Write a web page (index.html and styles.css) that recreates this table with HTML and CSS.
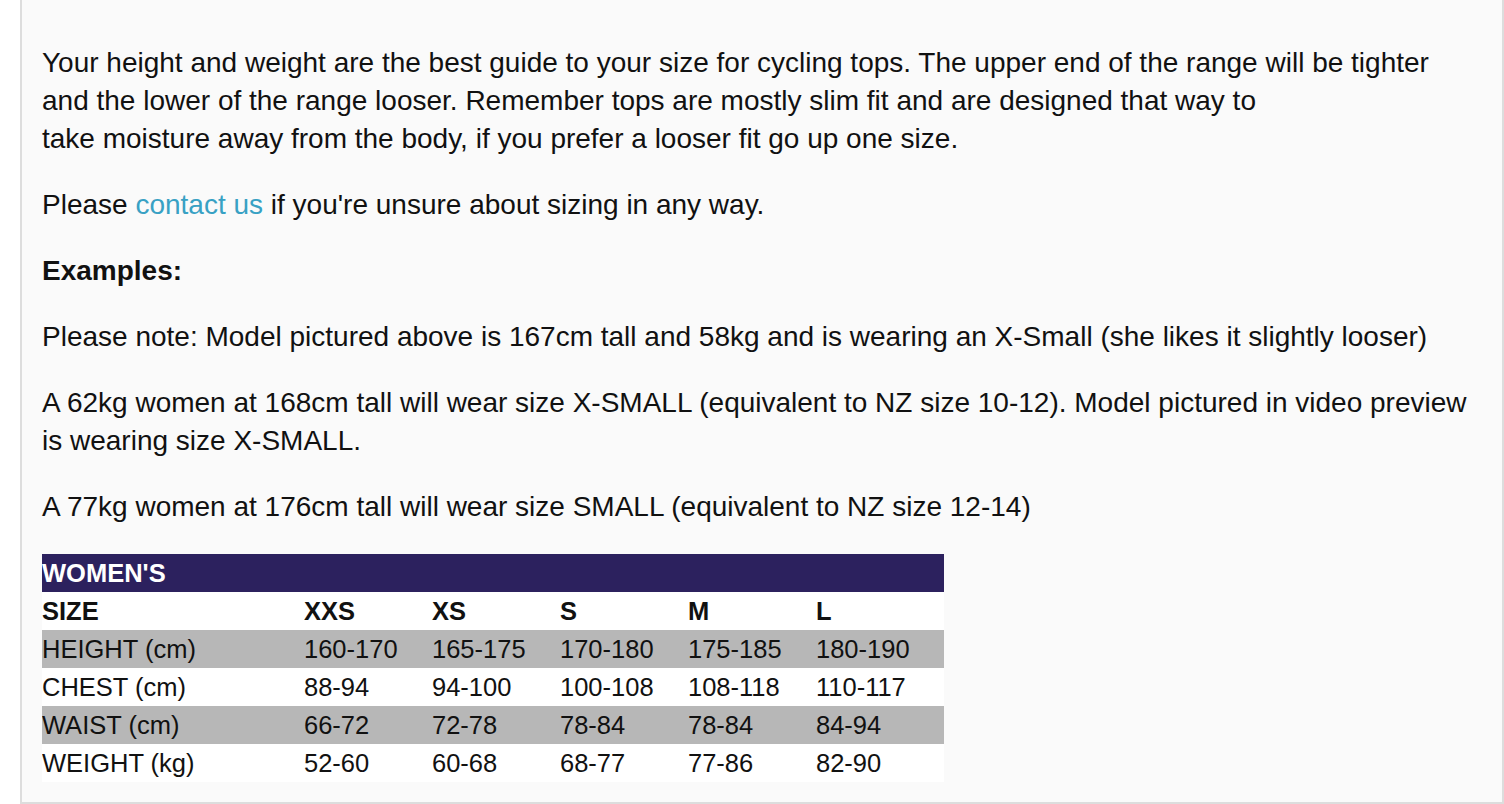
FILE: index.html
```html
<!DOCTYPE html>
<html lang="en">
<head>
<meta charset="utf-8">
<title>Sizing</title>
<link rel="stylesheet" href="styles.css">
</head>
<body>
<div class="panel">
  <p>Your height and weight are the best guide to your size for cycling tops. The upper end of the range will be tighter and the lower of the range looser. Remember tops are mostly slim fit and are designed that way to<br>take moisture away from the body, if you prefer a looser fit go up one size.</p>
  <p>Please <a href="#" class="link">contact us</a> if you're unsure about sizing in any way.</p>
  <p class="strong">Examples:</p>
  <p>Please note: Model pictured above is 167cm tall and 58kg and is wearing an X-Small (she likes it slightly looser)</p>
  <p>A 62kg women at 168cm tall will wear size X-SMALL (equivalent to NZ size 10-12). Model pictured in video preview is wearing size X-SMALL.</p>
  <p>A 77kg women at 176cm tall will wear size SMALL (equivalent to NZ size 12-14)</p>
  <table class="chart">
    <colgroup>
      <col class="col-label">
      <col class="col-size">
      <col class="col-size">
      <col class="col-size">
      <col class="col-size">
      <col class="col-size">
    </colgroup>
    <tr class="head"><td colspan="6">WOMEN'S</td></tr>
    <tr class="sizes"><td>SIZE</td><td>XXS</td><td>XS</td><td>S</td><td>M</td><td>L</td></tr>
    <tr class="shade"><td>HEIGHT (cm)</td><td>160-170</td><td>165-175</td><td>170-180</td><td>175-185</td><td>180-190</td></tr>
    <tr><td>CHEST (cm)</td><td>88-94</td><td>94-100</td><td>100-108</td><td>108-118</td><td>110-117</td></tr>
    <tr class="shade"><td>WAIST (cm)</td><td>66-72</td><td>72-78</td><td>78-84</td><td>78-84</td><td>84-94</td></tr>
    <tr><td>WEIGHT (kg)</td><td>52-60</td><td>60-68</td><td>68-77</td><td>77-86</td><td>82-90</td></tr>
  </table>
</div>
</body>
</html>
```
FILE: styles.css
```css
html, body {
  margin: 0;
  padding: 0;
  background: #ffffff;
}
body {
  font-family: "Liberation Sans", Arial, Helvetica, sans-serif;
  color: #111111;
}
.panel {
  margin-left: 20px;
  background: #fafafa;
  border-left: 2px solid #dddddd;
  border-right: 2px solid #dddddd;
  border-bottom: 2px solid #dddddd;
  padding: 44px 20px 20px 20px;
  font-size: 28px;
  line-height: 38px;
}
.panel p {
  margin: 0 0 28px 0;
}
.strong {
  font-weight: bold;
}
.link {
  color: #38a1c4;
  text-decoration: none;
}
.chart {
  border-collapse: collapse;
  border-spacing: 0;
  width: 902px;
  table-layout: fixed;
  font-size: 25.5px;
  line-height: 38px;
  background: #ffffff;
}
.col-label {
  width: 262px;
}
.col-size {
  width: 128px;
}
.chart td {
  padding: 0;
  height: 38px;
  white-space: nowrap;
  overflow: hidden;
}
.chart .head td {
  background: #2c215e;
  color: #ffffff;
  font-weight: bold;
}
.chart .sizes td {
  font-weight: bold;
}
.chart .shade td {
  background: #b7b7b7;
}
```
